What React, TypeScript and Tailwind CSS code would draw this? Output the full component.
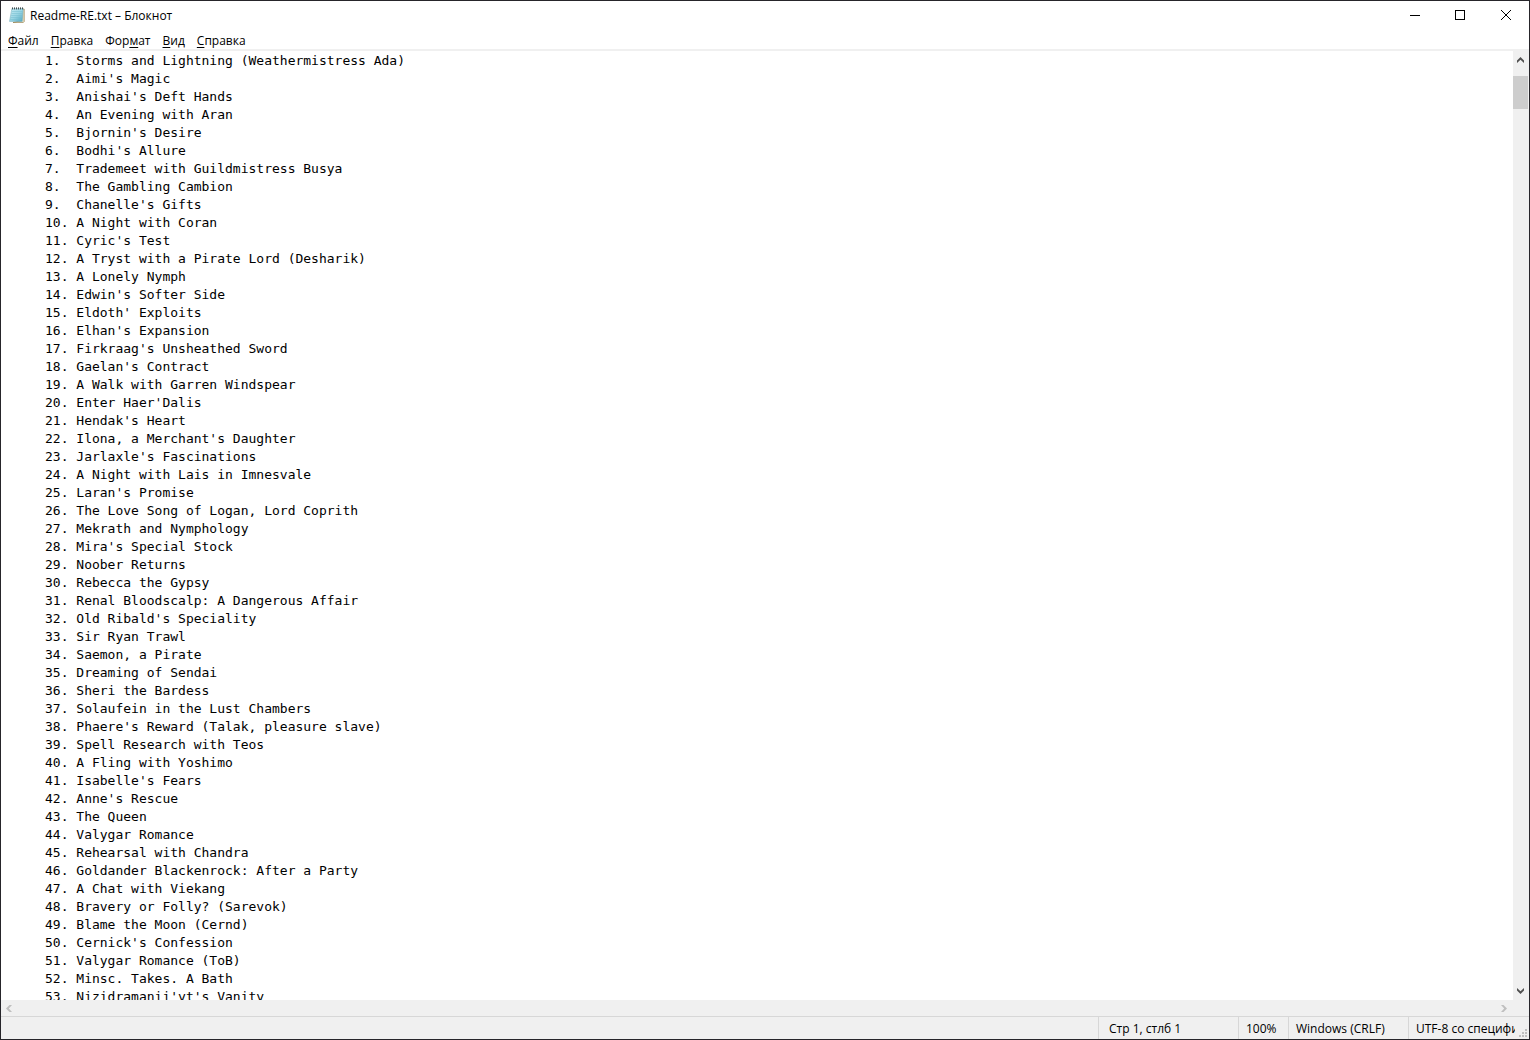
import type { ReactNode } from "react";

const titles = [
  "Storms and Lightning (Weathermistress Ada)",
  "Aimi's Magic",
  "Anishai's Deft Hands",
  "An Evening with Aran",
  "Bjornin's Desire",
  "Bodhi's Allure",
  "Trademeet with Guildmistress Busya",
  "The Gambling Cambion",
  "Chanelle's Gifts",
  "A Night with Coran",
  "Cyric's Test",
  "A Tryst with a Pirate Lord (Desharik)",
  "A Lonely Nymph",
  "Edwin's Softer Side",
  "Eldoth' Exploits",
  "Elhan's Expansion",
  "Firkraag's Unsheathed Sword",
  "Gaelan's Contract",
  "A Walk with Garren Windspear",
  "Enter Haer'Dalis",
  "Hendak's Heart",
  "Ilona, a Merchant's Daughter",
  "Jarlaxle's Fascinations",
  "A Night with Lais in Imnesvale",
  "Laran's Promise",
  "The Love Song of Logan, Lord Coprith",
  "Mekrath and Nymphology",
  "Mira's Special Stock",
  "Noober Returns",
  "Rebecca the Gypsy",
  "Renal Bloodscalp: A Dangerous Affair",
  "Old Ribald's Speciality",
  "Sir Ryan Trawl",
  "Saemon, a Pirate",
  "Dreaming of Sendai",
  "Sheri the Bardess",
  "Solaufein in the Lust Chambers",
  "Phaere's Reward (Talak, pleasure slave)",
  "Spell Research with Teos",
  "A Fling with Yoshimo",
  "Isabelle's Fears",
  "Anne's Rescue",
  "The Queen",
  "Valygar Romance",
  "Rehearsal with Chandra",
  "Goldander Blackenrock: After a Party",
  "A Chat with Viekang",
  "Bravery or Folly? (Sarevok)",
  "Blame the Moon (Cernd)",
  "Cernick's Confession",
  "Valygar Romance (ToB)",
  "Minsc. Takes. A Bath",
  "Nizidramanii'yt's Vanity",
];

const documentText = titles
  .map((title, i) => `${i + 1}.`.padEnd(4, " ") + title)
  .join("\n");

function NotepadIcon() {
  return (
    <svg width="16" height="16" viewBox="0 0 16 16" aria-hidden="true">
      <defs>
        <linearGradient id="page" x1="0" y1="0" x2="1" y2="1">
          <stop offset="0" stopColor="#c9ecf4" />
          <stop offset="0.5" stopColor="#9bd6e4" />
          <stop offset="1" stopColor="#4fa6c0" />
        </linearGradient>
      </defs>
      <path d="M12.6 2h2.6v12.6l-1 1H4l8-2z" fill="#e9dfc2" stroke="#94804f" strokeWidth="0.7" />
      <path d="M2.8 1.8h11.4l-1 12.6H0.5z" fill="url(#page)" stroke="#6fa9b8" strokeWidth="0.5" />
      <path d="M3 4.5h10.4M2.7 6.5h10.4M2.2 8.5h10.6M1.8 10.5h11M1.4 12.5h11" stroke="#74bccf" strokeWidth="0.5" />
      <path d="M3.5 0.4v2M5.5 0.4v2M7.5 0.4v2M9.5 0.4v2M11.5 0.4v2M13.5 0.4v2" stroke="#3f4c50" strokeWidth="1" />
    </svg>
  );
}

function CaptionButton({ label, children }: { label: string; children: ReactNode }) {
  return (
    <button type="button" aria-label={label} className="flex h-7 w-[46px] items-center justify-center hover:bg-gray-200">
      <svg width="12" height="12" viewBox="0 0 12 12" fill="none" stroke="#000" shapeRendering="crispEdges" aria-hidden="true">
        {children}
      </svg>
    </button>
  );
}

function MenuButton({ before = "", mark, after }: { before?: string; mark: string; after: string }) {
  return (
    <button type="button" className="px-1.5 whitespace-nowrap hover:bg-sky-100">
      {before}
      <span className="underline underline-offset-2">{mark}</span>
      {after}
    </button>
  );
}

function VerticalScrollbar() {
  return (
    <div className="flex w-4 shrink-0 flex-col bg-[#f0f0f0] pr-px">
      <button type="button" aria-label="Вверх" className="flex h-[18px] shrink-0 items-center justify-center">
        <svg width="7" height="6" viewBox="0 0 7 6" fill="#505050" aria-hidden="true">
          <path d="M0 3.5L3.5 0L7 3.5V6L3.5 2.8L0 6z" />
        </svg>
      </button>
      <div className="flex-1 pt-[7px]">
        <div className="h-[33px] bg-[#cdcdcd]" />
      </div>
      <button type="button" aria-label="Вниз" className="flex h-[18px] shrink-0 items-center justify-center">
        <svg width="7" height="6" viewBox="0 0 7 6" fill="#505050" aria-hidden="true">
          <path d="M0 2.5L3.5 6L7 2.5V0L3.5 3.2L0 0z" />
        </svg>
      </button>
    </div>
  );
}

function HorizontalScrollbar() {
  return (
    <div className="flex h-4 shrink-0 items-center justify-between bg-[#f0f0f0] pr-4">
      <button type="button" aria-label="Влево" className="flex h-4 w-4 items-center justify-center">
        <svg width="6" height="7" viewBox="0 0 6 7" fill="#bfbfbf" aria-hidden="true">
          <path d="M3.5 0L0 3.5L3.5 7H6L2.8 3.5L6 0z" />
        </svg>
      </button>
      <button type="button" aria-label="Вправо" className="flex h-4 w-[18px] items-center justify-center">
        <svg width="6" height="7" viewBox="0 0 6 7" fill="#bfbfbf" aria-hidden="true">
          <path d="M2.5 0L6 3.5L2.5 7H0L3.2 3.5L0 0z" />
        </svg>
      </button>
    </div>
  );
}

function SizeGrip() {
  return (
    <svg width="10" height="10" viewBox="0 0 10 10" fill="#bfbfbf" className="shrink-0 self-end" aria-hidden="true">
      <path d="M6 0h2v2h-2zM3 3h2v2h-2zM6 3h2v2h-2zM0 6h2v2h-2zM3 6h2v2h-2zM6 6h2v2h-2z" />
    </svg>
  );
}

export default function App() {
  return (
    <div className="flex h-screen flex-col overflow-hidden border border-[#26252a] bg-white font-['Open_Sans','Noto_Sans',sans-serif] text-xs text-black">
      <header className="flex h-[30px] shrink-0 justify-between">
        <div className="flex h-7 items-center gap-[5px] pl-2">
          <NotepadIcon />
          <h1 className="pt-0.5 whitespace-nowrap">Readme-RE.txt – Блокнот</h1>
        </div>
        <div className="flex">
          <CaptionButton label="Свернуть">
            <path d="M2 6.5h10" />
          </CaptionButton>
          <CaptionButton label="Развернуть">
            <path d="M1.5 1.5h9v9h-9z" />
          </CaptionButton>
          <CaptionButton label="Закрыть">
            <path d="M1 1l10 10M11 1l-10 10" shapeRendering="auto" />
          </CaptionButton>
        </div>
      </header>
      <nav className="flex h-5 shrink-0 border-b-2 border-[#f0f0f0] pt-0.5 pl-px">
        <MenuButton mark="Ф" after="айл" />
        <MenuButton mark="П" after="равка" />
        <MenuButton before="Фор" mark="м" after="ат" />
        <MenuButton mark="В" after="ид" />
        <MenuButton mark="С" after="правка" />
      </nav>
      <main className="flex min-h-0 flex-1">
        <textarea
          aria-label="Текст документа"
          spellCheck={false}
          wrap="off"
          defaultValue={documentText}
          className="min-w-0 flex-1 resize-none overflow-hidden bg-white pt-px pl-11 font-['DejaVu_Sans_Mono',monospace] text-[13px] leading-[18px] outline-none"
        />
        <VerticalScrollbar />
      </main>
      <HorizontalScrollbar />
      <footer className="flex h-[23px] shrink-0 justify-end border-t border-[#d7d7d7] bg-[#f0f0f0] leading-6 whitespace-nowrap">
        <div className="w-[140px] border-l border-[#d7d7d7] pl-[10px]">Стр 1, стлб 1</div>
        <div className="w-[50px] border-l border-[#d7d7d7] pl-[7px]">100%</div>
        <div className="w-[120px] border-l border-[#d7d7d7] pl-[7px]">Windows (CRLF)</div>
        <div className="flex w-[121px] border-l border-[#d7d7d7] pl-[7px]">
          <span className="flex-1 overflow-hidden">UTF-8 со специфи</span>
          <span className="flex pl-1">
            <SizeGrip />
          </span>
        </div>
      </footer>
    </div>
  );
}
